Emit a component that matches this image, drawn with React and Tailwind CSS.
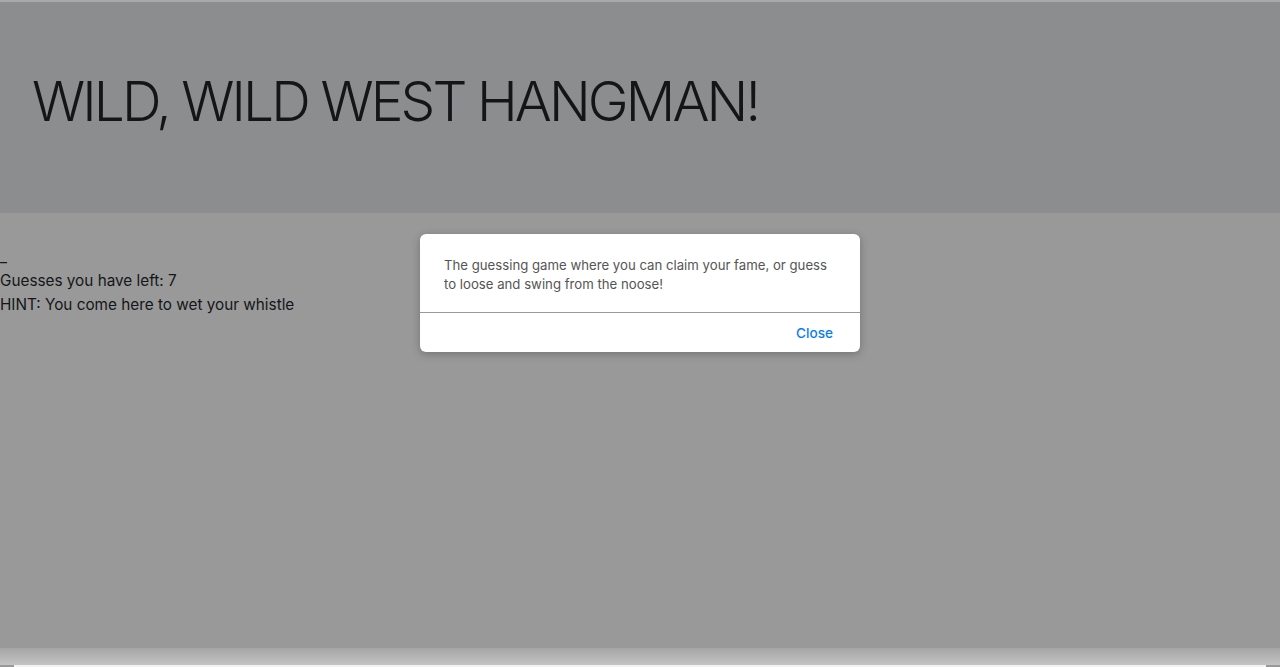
export default function App() {
  return (
    <div className="relative w-[1280px] h-[667px] overflow-hidden bg-[#999999] font-['Inter','Liberation_Sans',sans-serif]">
      {/* page behind the modal backdrop */}
      <div className="flex flex-col h-[648px] border-t-2 border-[#a9a9a9]">
        <div className="h-[211px] bg-[#8c8d8f] flex items-center px-8">
          <h1 className="text-[55px] font-light tracking-[-2.9px] text-[#141517] leading-none mt-[-12px]">
            WILD, WILD WEST HANGMAN!
          </h1>
        </div>
        <div className="pt-[32px] text-[15.3px] leading-[24px] text-[#141618]">
          <div>_</div>
          <div>Guesses you have left: 7</div>
          <div>HINT: You come here to wet your whistle</div>
        </div>
      </div>
      <div className="h-[17px] bg-gradient-to-b from-[#a5a5a5] to-[#c4c4c4]" />
      <div className="h-[2px] bg-[#f2f2f2] mx-[14px]" />

      {/* modal */}
      <div className="absolute left-[420px] top-[234px] w-[440px] bg-white rounded-[6px] shadow-[0_2px_8px_rgba(0,0,0,0.25)]">
        <div className="px-6 pt-[22px] pb-[18px] text-[13.2px] leading-[19px] text-[#555555]">
          The guessing game where you can claim your fame, or guess to loose and swing from the noose!
        </div>
        <div className="h-px bg-[#9a9a9a]" />
        <div className="flex justify-end px-[27px] pt-[11px] pb-[10px]">
          <button className="text-[13.6px] leading-[18px] font-medium text-[#0a7cf0]">Close</button>
        </div>
      </div>
    </div>
  );
}
